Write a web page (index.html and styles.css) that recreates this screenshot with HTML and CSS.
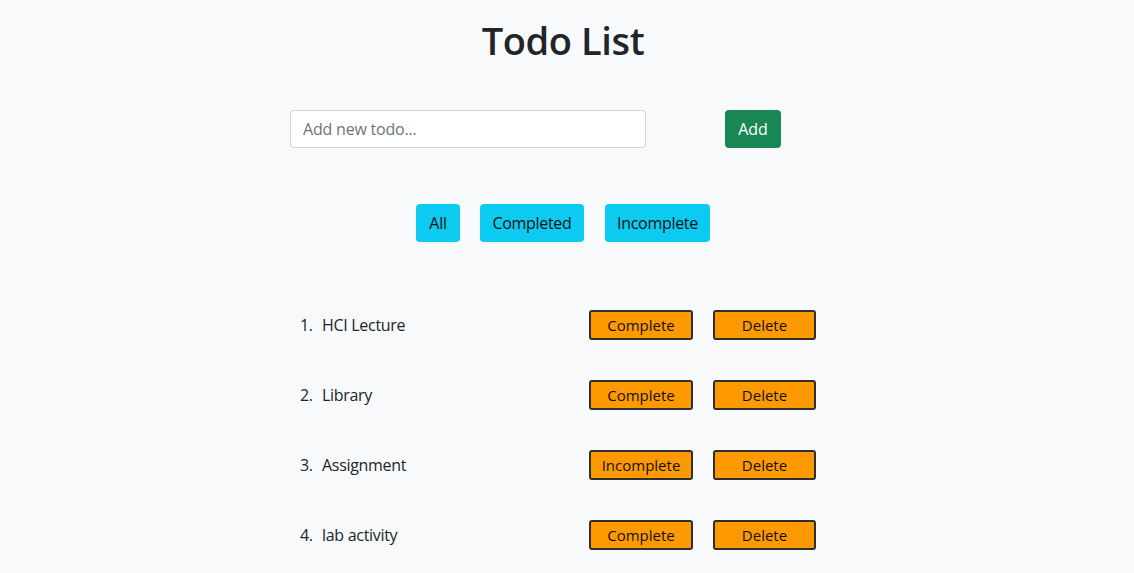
FILE: index.html
```html
<!DOCTYPE html>
<html>
<head>
<meta charset="utf-8">
<link rel="stylesheet" href="styles.css">
</head>
<body>
<main class="app">
  <h1 class="title">Todo List</h1>
  <form class="add-row">
    <input class="todo-input" type="text" placeholder="Add new todo...">
    <button class="btn-add" type="button">Add</button>
  </form>
  <div class="filters">
    <button class="btn-filter btn-all" type="button">All</button>
    <button class="btn-filter btn-completed" type="button">Completed</button>
    <button class="btn-filter btn-incomplete" type="button">Incomplete</button>
  </div>
  <ol class="todos">
    <li class="todo"><span class="num">1.</span><span class="name">HCI Lecture</span><button class="btn-orange">Complete</button><button class="btn-orange">Delete</button></li>
    <li class="todo"><span class="num">2.</span><span class="name">Library</span><button class="btn-orange">Complete</button><button class="btn-orange">Delete</button></li>
    <li class="todo"><span class="num">3.</span><span class="name">Assignment</span><button class="btn-orange">Incomplete</button><button class="btn-orange">Delete</button></li>
    <li class="todo"><span class="num">4.</span><span class="name">lab activity</span><button class="btn-orange">Complete</button><button class="btn-orange">Delete</button></li>
  </ol>
</main>
</body>
</html>
```
FILE: styles.css
```css
html, body {
  margin: 0;
  padding: 0;
  background: #f8f9fa;
  font-family: "Open Sans", "Noto Sans", "Liberation Sans", sans-serif;
  color: #212529;
}
.app {
  width: 1134px;
  display: flex;
  flex-direction: column;
}
.title {
  margin: 15px 0 0;
  padding-right: 8px;
  text-align: center;
  font-size: 38px;
  font-weight: 600;
  line-height: 50px;
  letter-spacing: -0.4px;
}
.add-row {
  margin: 45px 0 0;
  padding-left: 290px;
  display: flex;
  gap: 79px;
}
.todo-input {
  box-sizing: border-box;
  width: 356px;
  height: 38px;
  padding: 6px 12px;
  border: 1px solid #ced4da;
  border-radius: 4px;
  background: #fff;
  font-family: inherit;
  font-size: 16px;
  letter-spacing: -0.2px;
  color: #212529;
}
.todo-input::placeholder { color: #6c757d; }
.btn-add {
  box-sizing: border-box;
  width: 56px;
  height: 38px;
  border: none;
  border-radius: 4px;
  background: #198754;
  color: #fff;
  font-family: inherit;
  font-size: 16px;
  padding: 0;
}
.filters {
  margin-top: 56px;
  padding-left: 416px;
  display: flex;
  gap: 20px;
}
.btn-filter {
  box-sizing: border-box;
  height: 38px;
  padding: 0;
  border: none;
  border-radius: 4px;
  background: #0dcaf0;
  color: #111;
  font-family: inherit;
  font-size: 16px;
  letter-spacing: -0.3px;
}
.btn-all { width: 44px; }
.btn-completed { width: 104px; }
.btn-incomplete { width: 105px; margin-left: 1px; }
.todos {
  list-style: none;
  margin: 68px 0 0;
  padding: 0 0 0 300px;
  display: flex;
  flex-direction: column;
  gap: 40px;
}
.todo {
  display: flex;
  align-items: center;
  height: 30px;
  font-size: 16px;
  letter-spacing: -0.3px;
}
.num {
  width: 22px;
}
.name {
  width: 267px;
}
.btn-orange {
  box-sizing: border-box;
  width: 104px;
  height: 30px;
  padding: 0;
  margin-right: 20px;
  border: 2px solid #2f2f2f;
  border-radius: 3px;
  background: #ff9900;
  color: #111;
  font-family: inherit;
  font-size: 15px;
  letter-spacing: 0;
}
.btn-orange + .btn-orange { width: 103px; }
```
